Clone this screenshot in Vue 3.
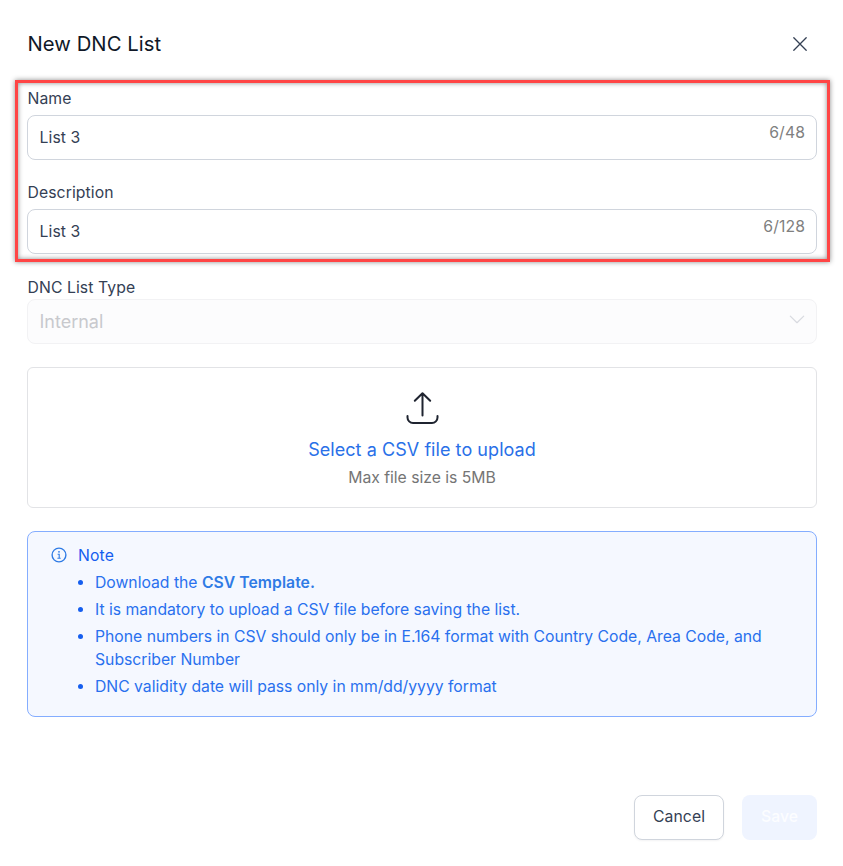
<script setup>
import { ref } from 'vue'

const fields = ref([
  { id: 'name', label: 'Name', value: 'List 3', max: 48 },
  { id: 'description', label: 'Description', value: 'List 3', max: 128 },
])
</script>

<template>
  <main class="dialog">
    <header class="header">
      <h1 class="title">New DNC List</h1>
      <button class="close" type="button" aria-label="Close">
        <svg width="16" height="16" viewBox="0 0 16 16" fill="none" stroke="#344054" stroke-width="1.3" stroke-linecap="round">
          <path d="M1.8 1.8 14.2 14.2M14.2 1.8 1.8 14.2" />
        </svg>
      </button>
    </header>

    <section class="fields">
      <div class="highlight"></div>
      <div v-for="field in fields" :key="field.id" class="field">
        <label class="label" :for="field.id">{{ field.label }}</label>
        <div class="control">
          <input :id="field.id" v-model="field.value" class="input" type="text" />
          <span class="count">{{ field.value.length }}/{{ field.max }}</span>
        </div>
      </div>
    </section>

    <section class="type">
      <span class="label type-label">DNC List Type</span>
      <div class="select">
        <span>Internal</span>
        <svg width="16" height="9" viewBox="0 0 16 9" fill="none" stroke="#d8dae0" stroke-width="1.2" stroke-linecap="round" stroke-linejoin="round">
          <path d="M1.3 1.1 8 7.7 14.7 1.1" />
        </svg>
      </div>
    </section>

    <section class="upload">
      <svg width="34" height="34" viewBox="0 0 34 34" fill="none" stroke="#1f2430" stroke-width="2" stroke-linecap="round" stroke-linejoin="round">
        <path d="M17.5 24.5V2.5M9.800 9.8 17.5 2.2l7.7 7.6" />
        <path d="M2.500 25v1.500a5.500 5.500 0 0 0 5.500 5.500h19a5.500 5.500 0 0 0 5.500-5.500V25" />
      </svg>
      <span class="upload-link">Select a CSV file to upload</span>
      <span class="upload-hint">Max file size is 5MB</span>
    </section>

    <section class="note">
      <div class="note-head">
        <svg width="16" height="16" viewBox="0 0 16 16" fill="none" stroke="#2f7be5" stroke-width="1.4">
          <circle cx="8" cy="8" r="6.9" />
          <path d="M6.6 7.300H8.200V11.200M6.400 11.300H9.700" stroke-width="1.1" />
          <circle cx="8" cy="4.800" r="0.9" fill="#2f7be5" stroke="none" />
        </svg>
        <span>Note</span>
      </div>
      <ul class="note-list">
        <li>Download the <strong>CSV Template.</strong></li>
        <li>It is mandatory to upload a CSV file before saving the list.</li>
        <li>Phone numbers in CSV should only be in E.164 format with Country Code, Area Code, and Subscriber Number</li>
        <li>DNC validity date will pass only in mm/dd/yyyy format</li>
      </ul>
    </section>

    <footer class="footer">
      <button class="btn cancel" type="button">Cancel</button>
      <button class="btn save" type="button" disabled>Save</button>
    </footer>
  </main>
</template>

<style>
body {
  background: #fff;
}
</style>

<style scoped>
.dialog {
  box-sizing: border-box;
  display: flex;
  flex-direction: column;
  width: 843px;
  height: 866px;
  padding: 28px 26px 26px 27px;
  font-family: Inter, 'Liberation Sans', sans-serif;
  font-size: 15.75px;
  color: #344054;
}

.dialog *,
.dialog *::before {
  box-sizing: border-box;
}

.header {
  display: flex;
  align-items: center;
  justify-content: space-between;
  height: 32px;
  padding-right: 9px;
}

.title {
  margin: 0;
  padding-left: 0.5px;
  font-size: 20.25px;
  line-height: 32px;
  font-weight: 400;
  letter-spacing: 0.05px;
  color: #101828;
}

.close {
  display: flex;
  padding: 0;
  border: 0;
  background: none;
}

.fields {
  position: relative;
  display: flex;
  flex-direction: column;
  gap: 21px;
  margin-top: 27px;
}

.highlight {
  position: absolute;
  top: -7px;
  right: -13px;
  bottom: -8px;
  left: -12px;
  border: 3px solid #ff4545;
  box-shadow: 0 0 5px rgba(0, 0, 0, 0.45), inset 0 0 5px rgba(0, 0, 0, 0.45);
  pointer-events: none;
}

.field {
  display: flex;
  flex-direction: column;
  gap: 5px;
}

.label {
  padding-left: 0.5px;
  line-height: 23px;
  letter-spacing: 0.08px;
  color: #344054;
}

.control {
  display: flex;
  height: 45px;
  padding: 0 11px 0 11.5px;
  border: 1px solid #d0d5dd;
  border-radius: 8px;
}

.input {
  flex: 1;
  min-width: 0;
  padding: 0;
  border: 0;
  outline: 0;
  background: transparent;
  font: inherit;
  letter-spacing: 0.08px;
  color: #344054;
}

.count {
  margin-top: 5px;
  line-height: 23px;
  letter-spacing: 0.1px;
  color: #808080;
}

.type {
  display: flex;
  flex-direction: column;
  margin-top: 22px;
}

.select {
  display: flex;
  align-items: center;
  justify-content: space-between;
  height: 45px;
  padding: 0 11px 0 11.5px;
  border: 1px solid #f2f2f4;
  border-radius: 8px;
  background: #fcfcfd;
  font-size: 18px;
  color: #c8c9cd;
}

.select svg {
  margin-top: -4px;
}

.upload {
  display: flex;
  flex-direction: column;
  align-items: center;
  height: 141px;
  margin-top: 23px;
  padding-top: 23px;
  border: 1px solid #e2e3e6;
  border-radius: 6px;
}

.upload-link {
  margin-top: 11px;
  font-size: 18px;
  line-height: 27px;
  letter-spacing: 0.06px;
  color: #2970e8;
}

.upload-hint {
  margin-top: 2px;
  line-height: 25px;
  letter-spacing: -0.03px;
  color: #757575;
}

.note {
  height: 186px;
  margin-top: 23px;
  padding: 12px 23px 0;
  border: 1px solid #84adff;
  border-radius: 8px;
  background: #f5f8ff;
  color: #155eef;
}

.note-head {
  display: flex;
  align-items: center;
  gap: 11px;
  line-height: 23px;
  letter-spacing: 0.15px;
}

.note-head svg {
  margin-top: -1px;
}

.note-list {
  display: flex;
  flex-direction: column;
  gap: 4px;
  margin: 4px 0 0;
  padding: 0 0 0 44px;
  list-style: none;
  line-height: 23px;
  letter-spacing: -0.015px;
  color: #2970ee;
}

.note-list li {
  position: relative;
}

.note-list li::before {
  content: '';
  position: absolute;
  top: 9px;
  left: -17px;
  width: 5px;
  height: 5px;
  border-radius: 50%;
  background: #155eef;
}

.note-list strong {
  font-weight: 600;
  letter-spacing: 0.03px;
  color: #2f7be5;
}

.footer {
  display: flex;
  justify-content: flex-end;
  gap: 18px;
  margin-top: auto;
}

.btn {
  height: 45px;
  padding: 0 0 2px;
  border-radius: 8px;
  font: inherit;
}

.cancel {
  width: 90px;
  border: 1px solid #d0d5dd;
  background: #fff;
  color: #344054;
  letter-spacing: 0.08px;
  box-shadow: 0 1px 2px rgba(16, 24, 40, 0.05);
}

.save {
  width: 75px;
  border: 0;
  background: #eff4ff;
  color: #fcfdff;
  font-weight: 500;
}
</style>
